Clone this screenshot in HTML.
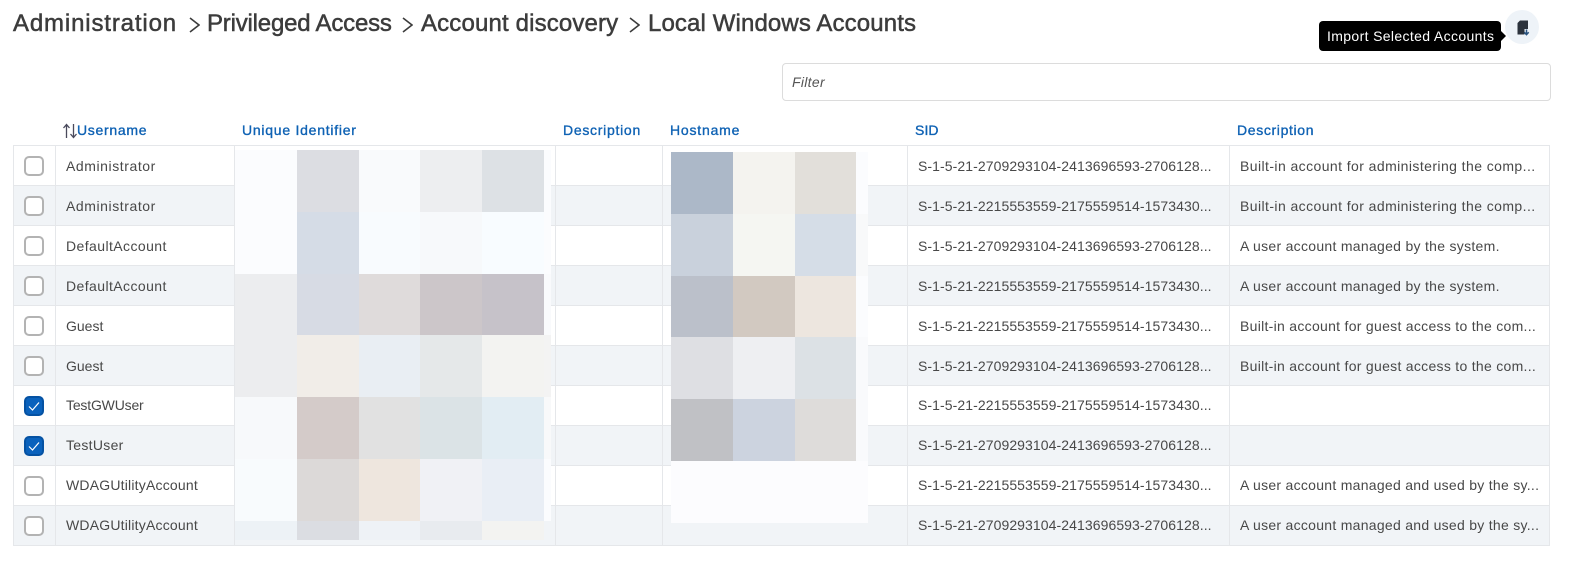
<!DOCTYPE html>
<html>
<head>
<meta charset="utf-8">
<style>
html,body{margin:0;padding:0;background:#fff;width:1573px;height:569px;overflow:hidden}
body{position:relative;font-family:"Liberation Sans",sans-serif;font-size:14px;color:#484848}
.a{position:absolute;white-space:nowrap}
.t{top:7px;font-size:24px;line-height:34px;color:#3c3c3c;-webkit-text-stroke:.5px #3c3c3c;letter-spacing:.15px}
.chev{position:absolute;top:16px;width:11px;height:18px}
.h{top:121px;line-height:18px;color:#0f62b4;-webkit-text-stroke:.35px #0f62b4;letter-spacing:.7px}
.r{position:absolute;left:13px;width:1537px;height:40px;box-sizing:border-box;border-bottom:1px solid #e5e7ea;background:#fff}
.r.s{background:#f1f4f7}
.v{position:absolute;top:145px;width:1px;height:400px;background:#e5e7ea}
.c{position:absolute;left:24px;width:20px;height:20px;box-sizing:border-box;border:2px solid #b3b3b3;border-radius:5px;background:#fff}
.c.k{background:#0a62bd;border-color:#0552a3}
.c svg{position:absolute;left:1px;top:1px}
.u,.i,.d{position:absolute;line-height:20px;white-space:nowrap;letter-spacing:.42px}
.u{left:66px}
.i{left:918px;letter-spacing:.08px}
.d{left:1240px}
.d.g{letter-spacing:.29px}
.d.m{letter-spacing:.29px}
.d.n{letter-spacing:.28px}
.b{position:absolute}
</style>
</head>
<body>
<div class="a t" style="left:13px;letter-spacing:.85px">Administration</div>
<svg class="chev" style="left:189px" viewBox="0 0 11 18"><path d="M1 2l9 7-9 7" fill="none" stroke="#3c3c3c" stroke-width="1.6"/></svg>
<div class="a t" style="left:207px;letter-spacing:-.2px">Privileged Access</div>
<svg class="chev" style="left:402px" viewBox="0 0 11 18"><path d="M1 2l9 7-9 7" fill="none" stroke="#3c3c3c" stroke-width="1.6"/></svg>
<div class="a t" style="left:421px">Account discovery</div>
<svg class="chev" style="left:629px" viewBox="0 0 11 18"><path d="M1 2l9 7-9 7" fill="none" stroke="#3c3c3c" stroke-width="1.6"/></svg>
<div class="a t" style="left:648px;letter-spacing:.12px">Local Windows Accounts</div>

<div class="b" style="left:1505px;top:10px;width:34px;height:34px;border-radius:50%;background:#eef3f8"></div>
<svg class="b" style="left:1516px;top:20px" width="14" height="16" viewBox="0 0 14 16"><path d="M4 .5h8v8.500H8.500v5.500H1.500V3z" fill="#2b323c"/><path d="M10.500 9.500v5M8.300 12.300l2.200 2.400 2.200-2.400" fill="none" stroke="#28527e" stroke-width="1.500"/></svg>
<div class="b" style="left:1319px;top:21px;width:182px;height:30px;border-radius:4px;background:#000"></div>
<div class="b" style="left:1501px;top:31px;width:0;height:0;border-left:5px solid #000;border-top:5px solid transparent;border-bottom:5px solid transparent"></div>
<div class="a" style="left:1327px;top:26px;line-height:20px;color:#fff;letter-spacing:.36px">Import Selected Accounts</div>

<div class="b" style="left:782px;top:63px;width:767px;height:36px;border:1px solid #dcdcdc;border-radius:4px;background:#fff"></div>
<div class="a" style="left:792px;top:72px;line-height:20px;font-style:italic;color:#555;letter-spacing:.3px">Filter</div>

<svg class="b" style="left:62px;top:123px" width="16" height="16" viewBox="0 0 16 16"><path d="M4.500 15V2M1.500 5l3-3.500 3 3.500M11.500 1v13M8.500 11l3 3.500 3-3.500" fill="none" stroke="#4a4a5c" stroke-width="1.300"/></svg>
<div class="a h" style="left:77px">Username</div>
<div class="a h" style="left:242px;letter-spacing:.75px">Unique Identifier</div>
<div class="a h" style="left:563px;letter-spacing:.72px">Description</div>
<div class="a h" style="left:670px;letter-spacing:.8px">Hostname</div>
<div class="a h" style="left:915px;letter-spacing:.1px">SID</div>
<div class="a h" style="left:1237px;letter-spacing:.65px">Description</div>

<div class="b" style="left:13px;top:145px;width:1537px;height:1px;background:#e5e7ea"></div>
<div class="r" style="top:146px;height:40px"></div>
<div class="r s" style="top:186px"></div>
<div class="r" style="top:226px"></div>
<div class="r s" style="top:266px"></div>
<div class="r" style="top:306px"></div>
<div class="r s" style="top:346px"></div>
<div class="r" style="top:386px"></div>
<div class="r s" style="top:426px"></div>
<div class="r" style="top:466px"></div>
<div class="r s" style="top:506px"></div>

<div class="v" style="left:13px"></div>
<div class="v" style="left:55px"></div>
<div class="v" style="left:234px"></div>
<div class="v" style="left:555px"></div>
<div class="v" style="left:662px"></div>
<div class="v" style="left:907px"></div>
<div class="v" style="left:1229px"></div>
<div class="v" style="left:1549px"></div>

<!-- checkboxes -->
<div class="c" style="top:156px"></div>
<div class="c" style="top:196px"></div>
<div class="c" style="top:236px"></div>
<div class="c" style="top:276px"></div>
<div class="c" style="top:316px"></div>
<div class="c" style="top:356px"></div>
<div class="c k" style="top:396px"><svg width="14" height="14" viewBox="0 0 14 14"><path d="M2 7.500l3.500 3.500L12 3.500" fill="none" stroke="#fff" stroke-width="1.200"/></svg></div>
<div class="c k" style="top:436px"><svg width="14" height="14" viewBox="0 0 14 14"><path d="M2 7.500l3.500 3.500L12 3.500" fill="none" stroke="#fff" stroke-width="1.200"/></svg></div>
<div class="c" style="top:476px"></div>
<div class="c" style="top:516px"></div>

<!-- usernames -->
<div class="u" style="top:156px;letter-spacing:.57px">Administrator</div>
<div class="u" style="top:196px;letter-spacing:.57px">Administrator</div>
<div class="u" style="top:236px">DefaultAccount</div>
<div class="u" style="top:276px">DefaultAccount</div>
<div class="u" style="top:316px;letter-spacing:0">Guest</div>
<div class="u" style="top:356px;letter-spacing:0">Guest</div>
<div class="u" style="top:395px;letter-spacing:-.18px">TestGWUser</div>
<div class="u" style="top:435px;letter-spacing:.3px">TestUser</div>
<div class="u" style="top:475px;letter-spacing:.2px">WDAGUtilityAccount</div>
<div class="u" style="top:515px;letter-spacing:.2px">WDAGUtilityAccount</div>

<!-- SIDs -->
<div class="i" style="top:156px">S-1-5-21-2709293104-2413696593-2706128...</div>
<div class="i" style="top:196px">S-1-5-21-2215553559-2175559514-1573430...</div>
<div class="i" style="top:236px">S-1-5-21-2709293104-2413696593-2706128...</div>
<div class="i" style="top:276px">S-1-5-21-2215553559-2175559514-1573430...</div>
<div class="i" style="top:316px">S-1-5-21-2215553559-2175559514-1573430...</div>
<div class="i" style="top:356px">S-1-5-21-2709293104-2413696593-2706128...</div>
<div class="i" style="top:395px">S-1-5-21-2215553559-2175559514-1573430...</div>
<div class="i" style="top:435px">S-1-5-21-2709293104-2413696593-2706128...</div>
<div class="i" style="top:475px">S-1-5-21-2215553559-2175559514-1573430...</div>
<div class="i" style="top:515px">S-1-5-21-2709293104-2413696593-2706128...</div>

<!-- descriptions -->
<div class="d" style="top:156px">Built-in account for administering the comp...</div>
<div class="d" style="top:196px">Built-in account for administering the comp...</div>
<div class="d m" style="top:236px">A user account managed by the system.</div>
<div class="d m" style="top:276px">A user account managed by the system.</div>
<div class="d g" style="top:316px">Built-in account for guest access to the com...</div>
<div class="d g" style="top:356px">Built-in account for guest access to the com...</div>
<div class="d n" style="top:475px">A user account managed and used by the sy...</div>
<div class="d n" style="top:515px">A user account managed and used by the sy...</div>

<!-- redaction blocks: Unique Identifier -->
<svg class="b" style="left:0;top:0" width="1573" height="569" shape-rendering="crispEdges">
<g>
<rect x="235" y="150" width="62" height="62" fill="#fbfcfe"/><rect x="297" y="150" width="62" height="62" fill="#dcdde2"/><rect x="359" y="150" width="61" height="62" fill="#f9fafc"/><rect x="420" y="150" width="62" height="62" fill="#edeef0"/><rect x="482" y="150" width="62" height="62" fill="#dde1e5"/><rect x="544" y="150" width="7" height="62" fill="#fbfcfe"/>
<rect x="235" y="212" width="62" height="62" fill="#fbfcfe"/><rect x="297" y="212" width="62" height="62" fill="#d5dce6"/><rect x="359" y="212" width="61" height="62" fill="#f8fbfe"/><rect x="420" y="212" width="62" height="62" fill="#f7f9fb"/><rect x="482" y="212" width="62" height="62" fill="#f8fcff"/><rect x="544" y="212" width="7" height="62" fill="#fbfcfe"/>
<rect x="235" y="274" width="62" height="61" fill="#ecedef"/><rect x="297" y="274" width="62" height="61" fill="#d7dbe4"/><rect x="359" y="274" width="61" height="61" fill="#dfdbdb"/><rect x="420" y="274" width="62" height="61" fill="#ccc6c9"/><rect x="482" y="274" width="62" height="61" fill="#c6c2c9"/><rect x="544" y="274" width="7" height="61" fill="#f9fafc"/>
<rect x="235" y="335" width="62" height="62" fill="#ecedef"/><rect x="297" y="335" width="62" height="62" fill="#f1ede8"/><rect x="359" y="335" width="61" height="62" fill="#e9eef3"/><rect x="420" y="335" width="62" height="62" fill="#e5e8e9"/><rect x="482" y="335" width="62" height="62" fill="#f3f3f1"/><rect x="544" y="335" width="7" height="62" fill="#f3f3f3"/>
<rect x="235" y="397" width="62" height="62" fill="#f7f9fb"/><rect x="297" y="397" width="62" height="62" fill="#d4cbc9"/><rect x="359" y="397" width="61" height="62" fill="#e1e1e1"/><rect x="420" y="397" width="62" height="62" fill="#dbe3e6"/><rect x="482" y="397" width="62" height="62" fill="#e2edf3"/><rect x="544" y="397" width="7" height="62" fill="#f8f9fa"/>
<rect x="235" y="459" width="62" height="62" fill="#f8fbfd"/><rect x="297" y="459" width="62" height="62" fill="#dcd9d8"/><rect x="359" y="459" width="61" height="62" fill="#eee6de"/><rect x="420" y="459" width="62" height="62" fill="#f0f1f5"/><rect x="482" y="459" width="62" height="62" fill="#e9eef5"/><rect x="544" y="459" width="7" height="62" fill="#fbfcfe"/>
<rect x="235" y="521" width="62" height="19" fill="#edf2f6"/><rect x="297" y="521" width="62" height="19" fill="#dbdde2"/><rect x="359" y="521" width="61" height="19" fill="#eef2f6"/><rect x="420" y="521" width="62" height="19" fill="#e8ebef"/><rect x="482" y="521" width="62" height="19" fill="#f3f3f1"/><rect x="544" y="521" width="7" height="19" fill="#f1f4f7"/>
</g>
<g>
<rect x="671" y="152" width="62" height="62" fill="#acb8c8"/><rect x="733" y="152" width="62" height="62" fill="#f4f3ef"/><rect x="795" y="152" width="61" height="62" fill="#e2dfda"/><rect x="856" y="152" width="12" height="62" fill="#fbfcfe"/>
<rect x="671" y="214" width="62" height="62" fill="#c9d1dc"/><rect x="733" y="214" width="62" height="62" fill="#f5f6f2"/><rect x="795" y="214" width="61" height="62" fill="#d5dde7"/><rect x="856" y="214" width="12" height="62" fill="#f8f9fa"/>
<rect x="671" y="276" width="62" height="61" fill="#bbc0ca"/><rect x="733" y="276" width="62" height="61" fill="#d2c9c1"/><rect x="795" y="276" width="61" height="61" fill="#ede6df"/><rect x="856" y="276" width="12" height="61" fill="#fbfcfe"/>
<rect x="671" y="337" width="62" height="62" fill="#dedfe3"/><rect x="733" y="337" width="62" height="62" fill="#eeeff2"/><rect x="795" y="337" width="61" height="62" fill="#dce1e5"/><rect x="856" y="337" width="12" height="62" fill="#f9fafc"/>
<rect x="671" y="399" width="62" height="62" fill="#c0c1c5"/><rect x="733" y="399" width="62" height="62" fill="#ccd3df"/><rect x="795" y="399" width="61" height="62" fill="#dedcda"/><rect x="856" y="399" width="12" height="62" fill="#f9fafc"/>
<rect x="671" y="461" width="197" height="62" fill="#fcfcfe"/>
</g>
</svg>
</body>
</html>
